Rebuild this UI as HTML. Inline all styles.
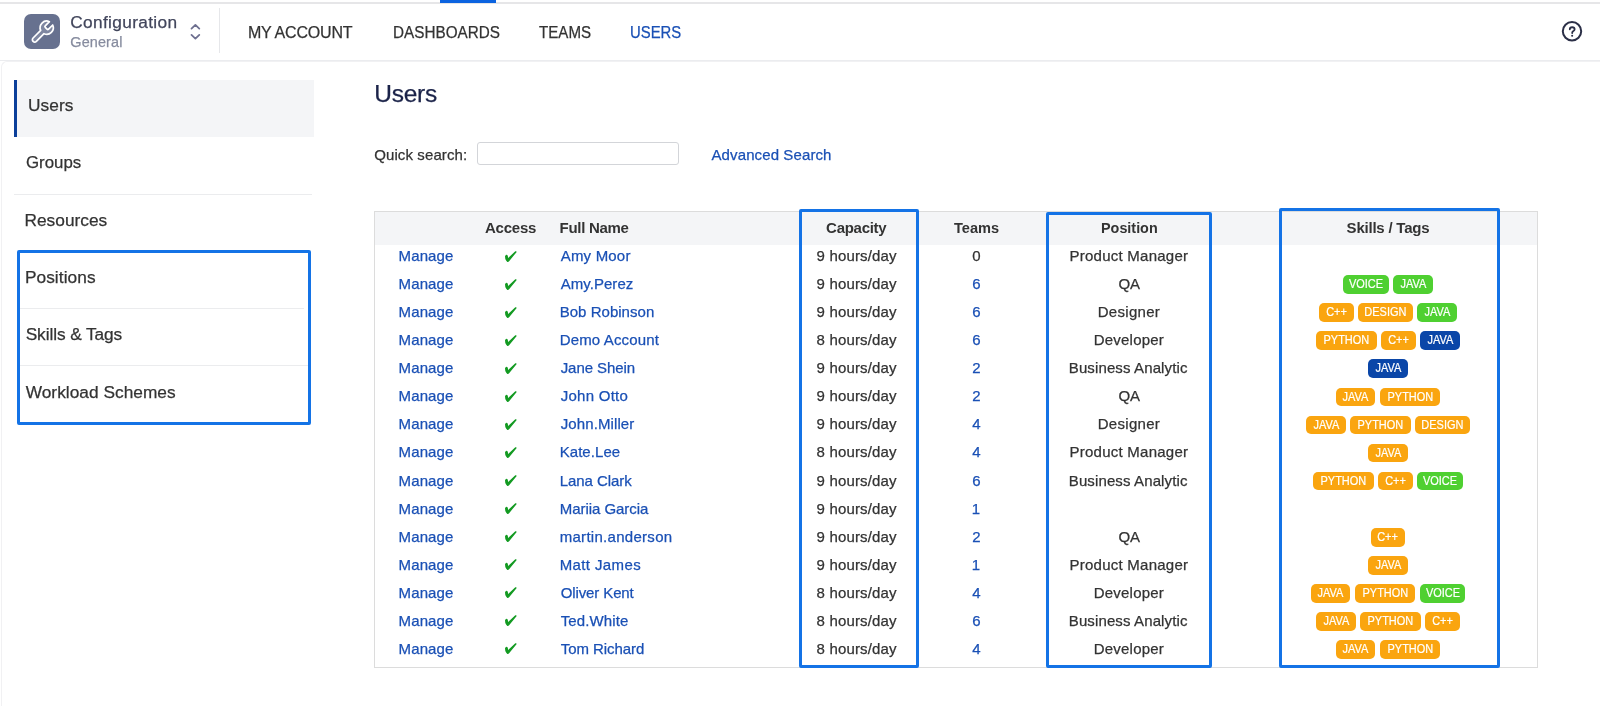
<!DOCTYPE html>
<html><head><meta charset="utf-8"><title>Users</title>
<style>
html,body{margin:0;padding:0;background:#fff;}
body{width:1600px;height:706px;position:relative;overflow:hidden;font-family:"Liberation Sans", sans-serif;}
.t{position:absolute;white-space:nowrap;-webkit-text-stroke:0.25px currentColor;}
body{will-change:transform;}
.r{position:absolute;}
svg.r{display:block;}
.tags{position:absolute;text-align:center;font-size:0;white-space:nowrap;}
.tag{display:inline-block;height:18.7px;line-height:19.2px;margin:0 2.35px;border-radius:5px;color:#fff;font-size:12.2px;font-family:"Liberation Sans", sans-serif;vertical-align:top;text-align:center;}
.tag i{font-style:normal;-webkit-text-stroke:0.2px #fff;display:inline-block;transform:scaleX(0.9);}
</style></head><body>
<div class="r" style="left:0px;top:2px;width:1600px;height:2px;background:#e6e6e8"></div>
<div class="r" style="left:440px;top:0px;width:56px;height:3px;background:#0b63e0"></div>
<div class="r" style="left:0px;top:60px;width:1600px;height:1px;background:#ebecef"></div>
<div class="r" style="left:24px;top:13.5px;width:36px;height:35.5px;border-radius:7px;background:#67718f"></div>
<svg class="r" style="left:24px;top:13.5px" width="36" height="36" viewBox="0 0 36 36">
<g transform="translate(5.1 4.9) scale(1.1)">
<path d="M14.7 6.3a1 1 0 0 0 0 1.4l1.6 1.6a1 1 0 0 0 1.4 0l3.77-3.77a6 6 0 0 1-7.94 7.94l-6.91 6.91a2.12 2.12 0 0 1-3-3l6.91-6.91a6 6 0 0 1 7.94-7.94l-3.76 3.76z" fill="rgba(255,255,255,0.16)" stroke="#fff" stroke-width="1.55" stroke-linejoin="round" stroke-linecap="round"/>
</g></svg>
<div class="t" style="left:70.30px;top:11.00px;font-size:17.3px;line-height:22.490px;color:#42465c;font-weight:400;letter-spacing:0.326px;">Configuration</div>
<div class="t" style="left:70.30px;top:33.00px;font-size:14.4px;line-height:18.720px;color:#878c9f;font-weight:400;letter-spacing:0.150px;">General</div>
<svg class="r" style="left:188px;top:22px" width="14" height="20" viewBox="0 0 14 20">
<path d="M3.5 6.6 L7.4 2.9 L11.3 6.6" fill="none" stroke="#6e7090" stroke-width="1.8" stroke-linecap="round" stroke-linejoin="round"/>
<path d="M3.5 12.9 L7.4 16.6 L11.3 12.9" fill="none" stroke="#6e7090" stroke-width="1.8" stroke-linecap="round" stroke-linejoin="round"/>
</svg>
<div class="r" style="left:219px;top:8px;width:1px;height:45px;background:#e6e7ea"></div>
<div class="t" style="left:247.90px;top:23.00px;font-size:16px;line-height:20.800px;color:#333333;font-weight:400;letter-spacing:-0.187px;">MY ACCOUNT</div>
<div class="t" style="left:392.70px;top:23.00px;font-size:16px;line-height:20.800px;color:#333333;font-weight:400;transform:scaleX(0.9542);transform-origin:1.00px 0;">DASHBOARDS</div>
<div class="t" style="left:539.00px;top:23.00px;font-size:16px;line-height:20.800px;color:#333333;font-weight:400;transform:scaleX(0.9441);transform-origin:0.00px 0;">TEAMS</div>
<div class="t" style="left:629.50px;top:23.00px;font-size:16px;line-height:20.800px;color:#1a50b5;font-weight:400;transform:scaleX(0.9279);transform-origin:1.00px 0;">USERS</div>
<svg class="r" style="left:1560px;top:19px" width="24" height="24" viewBox="0 0 24 24">
<circle cx="12" cy="12.2" r="9.2" fill="none" stroke="#2b2f47" stroke-width="2"/>
<path d="M9.8 10.2 C9.8 8.7 10.8 8.2 12.2 8.2 C13.6 8.2 14.6 9.0 14.6 10.2 C14.6 11.3 13.9 11.8 13.1 12.3 C12.5 12.7 12.2 13.1 12.2 13.9 v0.2" fill="none" stroke="#2b2f47" stroke-width="1.85" stroke-linecap="round"/>
<circle cx="12.15" cy="16.7" r="1.05" fill="#2b2f47"/>
</svg>
<div class="r" style="left:1px;top:61px;width:1700px;height:700px;box-sizing:border-box;border-left:1px solid #f1f1f3;border-top:1px solid #f1f1f3;border-top-left-radius:6px"></div>
<div class="r" style="left:14px;top:80px;width:300px;height:57px;background:#f4f5f7"></div>
<div class="r" style="left:14px;top:80px;width:3px;height:57px;background:#0b3f9a"></div>
<div class="t" style="left:28.00px;top:94.00px;font-size:17.3px;line-height:22.490px;color:#333333;font-weight:400;letter-spacing:0.053px;">Users</div>
<div class="t" style="left:25.80px;top:151.00px;font-size:17.3px;line-height:22.490px;color:#333333;font-weight:400;transform:scaleX(0.9732);transform-origin:0.00px 0;">Groups</div>
<div class="r" style="left:14px;top:194px;width:298px;height:1px;background:#ebecee"></div>
<div class="t" style="left:24.50px;top:209.00px;font-size:17.3px;line-height:22.490px;color:#333333;font-weight:400;letter-spacing:0.017px;">Resources</div>
<div class="r" style="left:20px;top:308px;width:284px;height:1px;background:#ebecee"></div>
<div class="r" style="left:20px;top:365px;width:288px;height:1px;background:#ebecee"></div>
<div class="t" style="left:24.90px;top:266.00px;font-size:17.3px;line-height:22.490px;color:#333333;font-weight:400;letter-spacing:0.065px;">Positions</div>
<div class="t" style="left:25.70px;top:323.00px;font-size:17.3px;line-height:22.490px;color:#333333;font-weight:400;letter-spacing:-0.093px;">Skills &amp; Tags</div>
<div class="t" style="left:25.70px;top:381.00px;font-size:17.3px;line-height:22.490px;color:#333333;font-weight:400;letter-spacing:0.028px;">Workload Schemes</div>
<div class="r" style="left:17px;top:250px;width:294px;height:175px;box-sizing:border-box;border:3px solid #1473e6;border-radius:2px"></div>
<div class="t" style="left:374.20px;top:78.00px;font-size:24.5px;line-height:31.850px;color:#1b2349;font-weight:400;letter-spacing:-0.232px;">Users</div>
<div class="t" style="left:374.20px;top:145.00px;font-size:15px;line-height:19.500px;color:#333333;font-weight:400;letter-spacing:0.106px;">Quick search:</div>
<div class="r" style="left:477px;top:142px;width:202px;height:23px;box-sizing:border-box;border:1px solid #d3d5d9;border-radius:3px;background:#fff"></div>
<div class="t" style="left:711.50px;top:145.00px;font-size:15px;line-height:19.500px;color:#1a50b5;font-weight:400;letter-spacing:0.109px;">Advanced Search</div>
<div class="r" style="left:374px;top:211px;width:1164px;height:457px;box-sizing:border-box;border:1px solid #dcdcdc;background:#fff"></div>
<div class="r" style="left:375px;top:212px;width:1162px;height:33px;background:#f4f5f7"></div>
<div class="t" style="left:485.00px;top:218.00px;font-size:15px;line-height:19.500px;color:#333333;font-weight:700;letter-spacing:-0.220px;-webkit-text-stroke:0;">Access</div>
<div class="t" style="left:559.50px;top:218.00px;font-size:15px;line-height:19.500px;color:#333333;font-weight:700;letter-spacing:-0.280px;-webkit-text-stroke:0;">Full Name</div>
<div class="t" style="left:826.10px;top:218.00px;font-size:15px;line-height:19.500px;color:#333333;font-weight:700;letter-spacing:-0.284px;-webkit-text-stroke:0;">Capacity</div>
<div class="t" style="left:954.00px;top:218.00px;font-size:15px;line-height:19.500px;color:#333333;font-weight:700;transform:scaleX(0.9724);transform-origin:0.00px 0;-webkit-text-stroke:0;">Teams</div>
<div class="t" style="left:1100.50px;top:218.00px;font-size:15px;line-height:19.500px;color:#333333;font-weight:700;transform:scaleX(0.9569);transform-origin:1.00px 0;-webkit-text-stroke:0;">Position</div>
<div class="t" style="left:1346.60px;top:218.00px;font-size:15px;line-height:19.500px;color:#333333;font-weight:700;letter-spacing:-0.221px;-webkit-text-stroke:0;">Skills / Tags</div>
<div class="t" style="left:398.60px;top:246.00px;font-size:15px;line-height:19.500px;color:#1a50b5;font-weight:400;letter-spacing:0.107px;">Manage</div>
<div class="r" style="left:503.5px;top:249.50px"><svg width="14" height="14" viewBox="0 0 14 14"><path d="M1.0 6.2 Q1.5 4.6 2.7 4.7 Q3.7 4.9 3.9 6.3 L4.1 8.0 L11.3 1.3 Q12.4 0.8 12.7 1.9 L5.1 11.2 Q4.1 12.3 3.1 11.7 Q2.0 10.9 1.3 9.0 Z" fill="#139a22"/></svg></div>
<div class="t" style="left:560.70px;top:246.00px;font-size:15px;line-height:19.500px;color:#1a50b5;font-weight:400;letter-spacing:0.193px;">Amy Moor</div>
<div class="t" style="left:816.55px;top:246.00px;font-size:15px;line-height:19.500px;color:#333333;font-weight:400;letter-spacing:0.162px;">9 hours/day</div>
<div class="t" style="left:972.20px;top:246.00px;font-size:15px;line-height:19.500px;color:#333333;font-weight:400;">0</div>
<div class="t" style="left:1069.50px;top:246.00px;font-size:15px;line-height:19.500px;color:#333333;font-weight:400;letter-spacing:0.245px;">Product Manager</div>
<div class="t" style="left:398.60px;top:274.00px;font-size:15px;line-height:19.500px;color:#1a50b5;font-weight:400;letter-spacing:0.107px;">Manage</div>
<div class="r" style="left:503.5px;top:277.57px"><svg width="14" height="14" viewBox="0 0 14 14"><path d="M1.0 6.2 Q1.5 4.6 2.7 4.7 Q3.7 4.9 3.9 6.3 L4.1 8.0 L11.3 1.3 Q12.4 0.8 12.7 1.9 L5.1 11.2 Q4.1 12.3 3.1 11.7 Q2.0 10.9 1.3 9.0 Z" fill="#139a22"/></svg></div>
<div class="t" style="left:560.70px;top:274.00px;font-size:15px;line-height:19.500px;color:#1a50b5;font-weight:400;letter-spacing:0.045px;">Amy.Perez</div>
<div class="t" style="left:816.55px;top:274.00px;font-size:15px;line-height:19.500px;color:#333333;font-weight:400;letter-spacing:0.162px;">9 hours/day</div>
<div class="t" style="left:972.20px;top:274.00px;font-size:15px;line-height:19.500px;color:#1a50b5;font-weight:400;">6</div>
<div class="t" style="left:1118.42px;top:274.00px;font-size:15px;line-height:19.500px;color:#333333;font-weight:400;">QA</div>
<div class="tags" style="left:1188px;width:400px;top:275.27px"><span class="tag" style="background:#4fd031;width:45.4px"><i>VOICE</i></span><span class="tag" style="background:#4fd031;width:39.3px"><i>JAVA</i></span></div>
<div class="t" style="left:398.60px;top:302.00px;font-size:15px;line-height:19.500px;color:#1a50b5;font-weight:400;letter-spacing:0.107px;">Manage</div>
<div class="r" style="left:503.5px;top:305.64px"><svg width="14" height="14" viewBox="0 0 14 14"><path d="M1.0 6.2 Q1.5 4.6 2.7 4.7 Q3.7 4.9 3.9 6.3 L4.1 8.0 L11.3 1.3 Q12.4 0.8 12.7 1.9 L5.1 11.2 Q4.1 12.3 3.1 11.7 Q2.0 10.9 1.3 9.0 Z" fill="#139a22"/></svg></div>
<div class="t" style="left:559.70px;top:302.00px;font-size:15px;line-height:19.500px;color:#1a50b5;font-weight:400;letter-spacing:0.028px;">Bob Robinson</div>
<div class="t" style="left:816.55px;top:302.00px;font-size:15px;line-height:19.500px;color:#333333;font-weight:400;letter-spacing:0.162px;">9 hours/day</div>
<div class="t" style="left:972.20px;top:302.00px;font-size:15px;line-height:19.500px;color:#1a50b5;font-weight:400;">6</div>
<div class="t" style="left:1097.75px;top:302.00px;font-size:15px;line-height:19.500px;color:#333333;font-weight:400;letter-spacing:0.281px;">Designer</div>
<div class="tags" style="left:1188px;width:400px;top:303.34px"><span class="tag" style="background:#faa50f;width:34.4px"><i>C++</i></span><span class="tag" style="background:#faa50f;width:54.4px"><i>DESIGN</i></span><span class="tag" style="background:#4fd031;width:39.3px"><i>JAVA</i></span></div>
<div class="t" style="left:398.60px;top:330.00px;font-size:15px;line-height:19.500px;color:#1a50b5;font-weight:400;letter-spacing:0.107px;">Manage</div>
<div class="r" style="left:503.5px;top:333.71px"><svg width="14" height="14" viewBox="0 0 14 14"><path d="M1.0 6.2 Q1.5 4.6 2.7 4.7 Q3.7 4.9 3.9 6.3 L4.1 8.0 L11.3 1.3 Q12.4 0.8 12.7 1.9 L5.1 11.2 Q4.1 12.3 3.1 11.7 Q2.0 10.9 1.3 9.0 Z" fill="#139a22"/></svg></div>
<div class="t" style="left:559.70px;top:330.00px;font-size:15px;line-height:19.500px;color:#1a50b5;font-weight:400;letter-spacing:0.144px;">Demo Account</div>
<div class="t" style="left:816.55px;top:330.00px;font-size:15px;line-height:19.500px;color:#333333;font-weight:400;letter-spacing:0.162px;">8 hours/day</div>
<div class="t" style="left:972.20px;top:330.00px;font-size:15px;line-height:19.500px;color:#1a50b5;font-weight:400;">6</div>
<div class="t" style="left:1093.65px;top:330.00px;font-size:15px;line-height:19.500px;color:#333333;font-weight:400;letter-spacing:0.228px;">Developer</div>
<div class="tags" style="left:1188px;width:400px;top:331.41px"><span class="tag" style="background:#faa50f;width:60.4px"><i>PYTHON</i></span><span class="tag" style="background:#faa50f;width:34.4px"><i>C++</i></span><span class="tag" style="background:#0a46a8;width:39.3px"><i>JAVA</i></span></div>
<div class="t" style="left:398.60px;top:358.00px;font-size:15px;line-height:19.500px;color:#1a50b5;font-weight:400;letter-spacing:0.107px;">Manage</div>
<div class="r" style="left:503.5px;top:361.78px"><svg width="14" height="14" viewBox="0 0 14 14"><path d="M1.0 6.2 Q1.5 4.6 2.7 4.7 Q3.7 4.9 3.9 6.3 L4.1 8.0 L11.3 1.3 Q12.4 0.8 12.7 1.9 L5.1 11.2 Q4.1 12.3 3.1 11.7 Q2.0 10.9 1.3 9.0 Z" fill="#139a22"/></svg></div>
<div class="t" style="left:560.70px;top:358.00px;font-size:15px;line-height:19.500px;color:#1a50b5;font-weight:400;letter-spacing:-0.068px;">Jane Shein</div>
<div class="t" style="left:816.55px;top:358.00px;font-size:15px;line-height:19.500px;color:#333333;font-weight:400;letter-spacing:0.162px;">9 hours/day</div>
<div class="t" style="left:972.20px;top:358.00px;font-size:15px;line-height:19.500px;color:#1a50b5;font-weight:400;">2</div>
<div class="t" style="left:1068.75px;top:358.00px;font-size:15px;line-height:19.500px;color:#333333;font-weight:400;letter-spacing:0.122px;">Business Analytic</div>
<div class="tags" style="left:1188px;width:400px;top:359.48px"><span class="tag" style="background:#0a46a8;width:39.3px"><i>JAVA</i></span></div>
<div class="t" style="left:398.60px;top:386.00px;font-size:15px;line-height:19.500px;color:#1a50b5;font-weight:400;letter-spacing:0.107px;">Manage</div>
<div class="r" style="left:503.5px;top:389.85px"><svg width="14" height="14" viewBox="0 0 14 14"><path d="M1.0 6.2 Q1.5 4.6 2.7 4.7 Q3.7 4.9 3.9 6.3 L4.1 8.0 L11.3 1.3 Q12.4 0.8 12.7 1.9 L5.1 11.2 Q4.1 12.3 3.1 11.7 Q2.0 10.9 1.3 9.0 Z" fill="#139a22"/></svg></div>
<div class="t" style="left:560.70px;top:386.00px;font-size:15px;line-height:19.500px;color:#1a50b5;font-weight:400;letter-spacing:0.263px;">John Otto</div>
<div class="t" style="left:816.55px;top:386.00px;font-size:15px;line-height:19.500px;color:#333333;font-weight:400;letter-spacing:0.162px;">9 hours/day</div>
<div class="t" style="left:972.20px;top:386.00px;font-size:15px;line-height:19.500px;color:#1a50b5;font-weight:400;">2</div>
<div class="t" style="left:1118.42px;top:386.00px;font-size:15px;line-height:19.500px;color:#333333;font-weight:400;">QA</div>
<div class="tags" style="left:1188px;width:400px;top:387.55px"><span class="tag" style="background:#faa50f;width:39.3px"><i>JAVA</i></span><span class="tag" style="background:#faa50f;width:60.4px"><i>PYTHON</i></span></div>
<div class="t" style="left:398.60px;top:414.00px;font-size:15px;line-height:19.500px;color:#1a50b5;font-weight:400;letter-spacing:0.107px;">Manage</div>
<div class="r" style="left:503.5px;top:417.92px"><svg width="14" height="14" viewBox="0 0 14 14"><path d="M1.0 6.2 Q1.5 4.6 2.7 4.7 Q3.7 4.9 3.9 6.3 L4.1 8.0 L11.3 1.3 Q12.4 0.8 12.7 1.9 L5.1 11.2 Q4.1 12.3 3.1 11.7 Q2.0 10.9 1.3 9.0 Z" fill="#139a22"/></svg></div>
<div class="t" style="left:560.70px;top:414.00px;font-size:15px;line-height:19.500px;color:#1a50b5;font-weight:400;letter-spacing:0.107px;">John.Miller</div>
<div class="t" style="left:816.55px;top:414.00px;font-size:15px;line-height:19.500px;color:#333333;font-weight:400;letter-spacing:0.162px;">9 hours/day</div>
<div class="t" style="left:972.20px;top:414.00px;font-size:15px;line-height:19.500px;color:#1a50b5;font-weight:400;">4</div>
<div class="t" style="left:1097.75px;top:414.00px;font-size:15px;line-height:19.500px;color:#333333;font-weight:400;letter-spacing:0.281px;">Designer</div>
<div class="tags" style="left:1188px;width:400px;top:415.62px"><span class="tag" style="background:#faa50f;width:39.3px"><i>JAVA</i></span><span class="tag" style="background:#faa50f;width:60.4px"><i>PYTHON</i></span><span class="tag" style="background:#faa50f;width:54.4px"><i>DESIGN</i></span></div>
<div class="t" style="left:398.60px;top:442.00px;font-size:15px;line-height:19.500px;color:#1a50b5;font-weight:400;letter-spacing:0.107px;">Manage</div>
<div class="r" style="left:503.5px;top:445.99px"><svg width="14" height="14" viewBox="0 0 14 14"><path d="M1.0 6.2 Q1.5 4.6 2.7 4.7 Q3.7 4.9 3.9 6.3 L4.1 8.0 L11.3 1.3 Q12.4 0.8 12.7 1.9 L5.1 11.2 Q4.1 12.3 3.1 11.7 Q2.0 10.9 1.3 9.0 Z" fill="#139a22"/></svg></div>
<div class="t" style="left:559.70px;top:442.00px;font-size:15px;line-height:19.500px;color:#1a50b5;font-weight:400;letter-spacing:0.056px;">Kate.Lee</div>
<div class="t" style="left:816.55px;top:442.00px;font-size:15px;line-height:19.500px;color:#333333;font-weight:400;letter-spacing:0.162px;">8 hours/day</div>
<div class="t" style="left:972.20px;top:442.00px;font-size:15px;line-height:19.500px;color:#1a50b5;font-weight:400;">4</div>
<div class="t" style="left:1069.50px;top:442.00px;font-size:15px;line-height:19.500px;color:#333333;font-weight:400;letter-spacing:0.245px;">Product Manager</div>
<div class="tags" style="left:1188px;width:400px;top:443.69px"><span class="tag" style="background:#faa50f;width:39.3px"><i>JAVA</i></span></div>
<div class="t" style="left:398.60px;top:471.00px;font-size:15px;line-height:19.500px;color:#1a50b5;font-weight:400;letter-spacing:0.107px;">Manage</div>
<div class="r" style="left:503.5px;top:474.06px"><svg width="14" height="14" viewBox="0 0 14 14"><path d="M1.0 6.2 Q1.5 4.6 2.7 4.7 Q3.7 4.9 3.9 6.3 L4.1 8.0 L11.3 1.3 Q12.4 0.8 12.7 1.9 L5.1 11.2 Q4.1 12.3 3.1 11.7 Q2.0 10.9 1.3 9.0 Z" fill="#139a22"/></svg></div>
<div class="t" style="left:559.70px;top:471.00px;font-size:15px;line-height:19.500px;color:#1a50b5;font-weight:400;letter-spacing:-0.060px;">Lana Clark</div>
<div class="t" style="left:816.55px;top:471.00px;font-size:15px;line-height:19.500px;color:#333333;font-weight:400;letter-spacing:0.162px;">9 hours/day</div>
<div class="t" style="left:972.20px;top:471.00px;font-size:15px;line-height:19.500px;color:#1a50b5;font-weight:400;">6</div>
<div class="t" style="left:1068.75px;top:471.00px;font-size:15px;line-height:19.500px;color:#333333;font-weight:400;letter-spacing:0.122px;">Business Analytic</div>
<div class="tags" style="left:1188px;width:400px;top:471.76px"><span class="tag" style="background:#faa50f;width:60.4px"><i>PYTHON</i></span><span class="tag" style="background:#faa50f;width:34.4px"><i>C++</i></span><span class="tag" style="background:#4fd031;width:45.4px"><i>VOICE</i></span></div>
<div class="t" style="left:398.60px;top:499.00px;font-size:15px;line-height:19.500px;color:#1a50b5;font-weight:400;letter-spacing:0.107px;">Manage</div>
<div class="r" style="left:503.5px;top:502.13px"><svg width="14" height="14" viewBox="0 0 14 14"><path d="M1.0 6.2 Q1.5 4.6 2.7 4.7 Q3.7 4.9 3.9 6.3 L4.1 8.0 L11.3 1.3 Q12.4 0.8 12.7 1.9 L5.1 11.2 Q4.1 12.3 3.1 11.7 Q2.0 10.9 1.3 9.0 Z" fill="#139a22"/></svg></div>
<div class="t" style="left:559.70px;top:499.00px;font-size:15px;line-height:19.500px;color:#1a50b5;font-weight:400;letter-spacing:-0.037px;">Mariia Garcia</div>
<div class="t" style="left:816.55px;top:499.00px;font-size:15px;line-height:19.500px;color:#333333;font-weight:400;letter-spacing:0.162px;">9 hours/day</div>
<div class="t" style="left:971.70px;top:499.00px;font-size:15px;line-height:19.500px;color:#1a50b5;font-weight:400;">1</div>
<div class="t" style="left:398.60px;top:527.00px;font-size:15px;line-height:19.500px;color:#1a50b5;font-weight:400;letter-spacing:0.107px;">Manage</div>
<div class="r" style="left:503.5px;top:530.20px"><svg width="14" height="14" viewBox="0 0 14 14"><path d="M1.0 6.2 Q1.5 4.6 2.7 4.7 Q3.7 4.9 3.9 6.3 L4.1 8.0 L11.3 1.3 Q12.4 0.8 12.7 1.9 L5.1 11.2 Q4.1 12.3 3.1 11.7 Q2.0 10.9 1.3 9.0 Z" fill="#139a22"/></svg></div>
<div class="t" style="left:559.70px;top:527.00px;font-size:15px;line-height:19.500px;color:#1a50b5;font-weight:400;letter-spacing:0.289px;">martin.anderson</div>
<div class="t" style="left:816.55px;top:527.00px;font-size:15px;line-height:19.500px;color:#333333;font-weight:400;letter-spacing:0.162px;">9 hours/day</div>
<div class="t" style="left:972.20px;top:527.00px;font-size:15px;line-height:19.500px;color:#1a50b5;font-weight:400;">2</div>
<div class="t" style="left:1118.42px;top:527.00px;font-size:15px;line-height:19.500px;color:#333333;font-weight:400;">QA</div>
<div class="tags" style="left:1188px;width:400px;top:527.90px"><span class="tag" style="background:#faa50f;width:34.4px"><i>C++</i></span></div>
<div class="t" style="left:398.60px;top:555.00px;font-size:15px;line-height:19.500px;color:#1a50b5;font-weight:400;letter-spacing:0.107px;">Manage</div>
<div class="r" style="left:503.5px;top:558.27px"><svg width="14" height="14" viewBox="0 0 14 14"><path d="M1.0 6.2 Q1.5 4.6 2.7 4.7 Q3.7 4.9 3.9 6.3 L4.1 8.0 L11.3 1.3 Q12.4 0.8 12.7 1.9 L5.1 11.2 Q4.1 12.3 3.1 11.7 Q2.0 10.9 1.3 9.0 Z" fill="#139a22"/></svg></div>
<div class="t" style="left:559.70px;top:555.00px;font-size:15px;line-height:19.500px;color:#1a50b5;font-weight:400;letter-spacing:0.387px;">Matt James</div>
<div class="t" style="left:816.55px;top:555.00px;font-size:15px;line-height:19.500px;color:#333333;font-weight:400;letter-spacing:0.162px;">9 hours/day</div>
<div class="t" style="left:971.70px;top:555.00px;font-size:15px;line-height:19.500px;color:#1a50b5;font-weight:400;">1</div>
<div class="t" style="left:1069.50px;top:555.00px;font-size:15px;line-height:19.500px;color:#333333;font-weight:400;letter-spacing:0.245px;">Product Manager</div>
<div class="tags" style="left:1188px;width:400px;top:555.97px"><span class="tag" style="background:#faa50f;width:39.3px"><i>JAVA</i></span></div>
<div class="t" style="left:398.60px;top:583.00px;font-size:15px;line-height:19.500px;color:#1a50b5;font-weight:400;letter-spacing:0.107px;">Manage</div>
<div class="r" style="left:503.5px;top:586.34px"><svg width="14" height="14" viewBox="0 0 14 14"><path d="M1.0 6.2 Q1.5 4.6 2.7 4.7 Q3.7 4.9 3.9 6.3 L4.1 8.0 L11.3 1.3 Q12.4 0.8 12.7 1.9 L5.1 11.2 Q4.1 12.3 3.1 11.7 Q2.0 10.9 1.3 9.0 Z" fill="#139a22"/></svg></div>
<div class="t" style="left:560.70px;top:583.00px;font-size:15px;line-height:19.500px;color:#1a50b5;font-weight:400;letter-spacing:-0.113px;">Oliver Kent</div>
<div class="t" style="left:816.55px;top:583.00px;font-size:15px;line-height:19.500px;color:#333333;font-weight:400;letter-spacing:0.162px;">8 hours/day</div>
<div class="t" style="left:972.20px;top:583.00px;font-size:15px;line-height:19.500px;color:#1a50b5;font-weight:400;">4</div>
<div class="t" style="left:1093.65px;top:583.00px;font-size:15px;line-height:19.500px;color:#333333;font-weight:400;letter-spacing:0.228px;">Developer</div>
<div class="tags" style="left:1188px;width:400px;top:584.04px"><span class="tag" style="background:#faa50f;width:39.3px"><i>JAVA</i></span><span class="tag" style="background:#faa50f;width:60.4px"><i>PYTHON</i></span><span class="tag" style="background:#4fd031;width:45.4px"><i>VOICE</i></span></div>
<div class="t" style="left:398.60px;top:611.00px;font-size:15px;line-height:19.500px;color:#1a50b5;font-weight:400;letter-spacing:0.107px;">Manage</div>
<div class="r" style="left:503.5px;top:614.41px"><svg width="14" height="14" viewBox="0 0 14 14"><path d="M1.0 6.2 Q1.5 4.6 2.7 4.7 Q3.7 4.9 3.9 6.3 L4.1 8.0 L11.3 1.3 Q12.4 0.8 12.7 1.9 L5.1 11.2 Q4.1 12.3 3.1 11.7 Q2.0 10.9 1.3 9.0 Z" fill="#139a22"/></svg></div>
<div class="t" style="left:560.70px;top:611.00px;font-size:15px;line-height:19.500px;color:#1a50b5;font-weight:400;letter-spacing:0.131px;">Ted.White</div>
<div class="t" style="left:816.55px;top:611.00px;font-size:15px;line-height:19.500px;color:#333333;font-weight:400;letter-spacing:0.162px;">8 hours/day</div>
<div class="t" style="left:972.20px;top:611.00px;font-size:15px;line-height:19.500px;color:#1a50b5;font-weight:400;">6</div>
<div class="t" style="left:1068.75px;top:611.00px;font-size:15px;line-height:19.500px;color:#333333;font-weight:400;letter-spacing:0.122px;">Business Analytic</div>
<div class="tags" style="left:1188px;width:400px;top:612.11px"><span class="tag" style="background:#faa50f;width:39.3px"><i>JAVA</i></span><span class="tag" style="background:#faa50f;width:60.4px"><i>PYTHON</i></span><span class="tag" style="background:#faa50f;width:34.4px"><i>C++</i></span></div>
<div class="t" style="left:398.60px;top:639.00px;font-size:15px;line-height:19.500px;color:#1a50b5;font-weight:400;letter-spacing:0.107px;">Manage</div>
<div class="r" style="left:503.5px;top:642.48px"><svg width="14" height="14" viewBox="0 0 14 14"><path d="M1.0 6.2 Q1.5 4.6 2.7 4.7 Q3.7 4.9 3.9 6.3 L4.1 8.0 L11.3 1.3 Q12.4 0.8 12.7 1.9 L5.1 11.2 Q4.1 12.3 3.1 11.7 Q2.0 10.9 1.3 9.0 Z" fill="#139a22"/></svg></div>
<div class="t" style="left:560.70px;top:639.00px;font-size:15px;line-height:19.500px;color:#1a50b5;font-weight:400;letter-spacing:-0.055px;">Tom Richard</div>
<div class="t" style="left:816.55px;top:639.00px;font-size:15px;line-height:19.500px;color:#333333;font-weight:400;letter-spacing:0.162px;">8 hours/day</div>
<div class="t" style="left:972.20px;top:639.00px;font-size:15px;line-height:19.500px;color:#1a50b5;font-weight:400;">4</div>
<div class="t" style="left:1093.65px;top:639.00px;font-size:15px;line-height:19.500px;color:#333333;font-weight:400;letter-spacing:0.228px;">Developer</div>
<div class="tags" style="left:1188px;width:400px;top:640.18px"><span class="tag" style="background:#faa50f;width:39.3px"><i>JAVA</i></span><span class="tag" style="background:#faa50f;width:60.4px"><i>PYTHON</i></span></div>
<div class="r" style="left:798.5px;top:209px;width:120px;height:459px;box-sizing:border-box;border:3.5px solid #1473e6;border-radius:2px"></div>
<div class="r" style="left:1046px;top:212px;width:166px;height:456px;box-sizing:border-box;border:3.5px solid #1473e6;border-radius:2px"></div>
<div class="r" style="left:1279px;top:208px;width:221px;height:460px;box-sizing:border-box;border:3.5px solid #1473e6;border-radius:2px"></div>
</body></html>
